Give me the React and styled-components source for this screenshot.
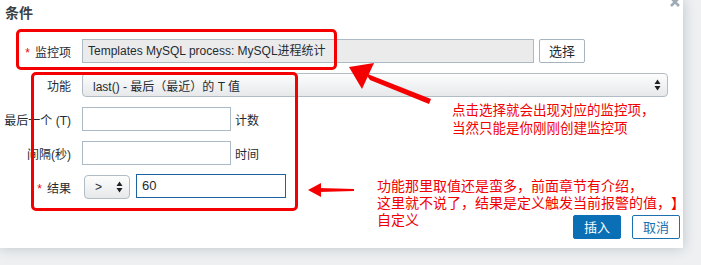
import React from "react";
import styled, { createGlobalStyle } from "styled-components";

const GlobalStyle = createGlobalStyle`
  html, body {
    margin: 0;
    padding: 0;
    background: #eef0f2;
    overflow: hidden;
  }
  body {
    font-family: Arial, "Liberation Sans", "Noto Sans CJK SC", sans-serif;
    text-spacing-trim: space-all;
  }
`;

const Page = styled.div`
  width: 701px;
  height: 265px;
  position: relative;
`;

const Dialog = styled.div`
  position: relative;
  width: 683px;
  height: 248px;
  background: #fff;
  box-shadow: 0 0 12px rgba(60, 75, 90, 0.28);
  display: flex;
  flex-direction: column;
`;

const Header = styled.div`
  height: 24px;
  line-height: 24px;
  padding-left: 5px;
  font-size: 14px;
  font-weight: bold;
  color: #3a3f44;
  font-family: "Noto Sans CJK SC", sans-serif;
`;

const Close = styled.svg`
  position: absolute;
  right: 2px;
  top: -4px;
`;

const Form = styled.div`
  margin-top: 15px;
  display: grid;
  grid-template-columns: 82px 1fr;
  row-gap: 10px;
  align-items: center;
`;

const Label = styled.div`
  text-align: right;
  padding-right: 11px;
  font-size: 12px;
  color: #1f2c33;
  font-family: "Liberation Sans", "Noto Sans CJK SC", sans-serif;
  white-space: nowrap;
`;

const Star = styled.span`
  color: #e00;
  margin-right: 5px;
`;

const Field = styled.div`
  display: flex;
  align-items: center;
  gap: ${p => p.$gap || 4}px;
  font-size: 12px;
  color: #1f2c33;
  font-family: "Liberation Sans", "Noto Sans CJK SC", sans-serif;
`;

const Input = styled.div`
  box-sizing: border-box;
  width: ${p => p.$w}px;
  height: 24px;
  line-height: 22px;
  padding: 0 5px;
  border: 1px solid ${p => (p.$focus ? "#1d62a0" : "#acbac5")};
  background: ${p => (p.$readonly ? "#ebebeb" : "#fff")};
  font-size: ${p => (p.$big ? 13 : 12)}px;
  color: #1f2c33;
  white-space: nowrap;
  overflow: hidden;
  margin-top: ${p => p.$mt || 0}px;
`;

const Select = styled.div`
  box-sizing: border-box;
  width: ${p => p.$w}px;
  height: 24px;
  margin-left: ${p => p.$ml || 0}px;
  padding: 0 6px 0 10px;
  display: flex;
  align-items: center;
  justify-content: space-between;
  border: 1px solid #b2bcc5;
  border-radius: 4px;
  background: linear-gradient(#fdfdfd, #e6e8ea);
  font-size: 12px;
  color: #1f2c33;
`;

const Button = styled.div`
  box-sizing: border-box;
  width: ${p => p.$w || 48}px;
  height: 24px;
  line-height: 22px;
  text-align: center;
  font-size: 13px;
  border-radius: 2px;
  border: 1px solid ${p => (p.$primary ? "#0a6fb5" : p.$blue ? "#1b71b0" : "#a6b4bf")};
  background: ${p => (p.$primary ? "#0a6fb5" : "#fff")};
  color: ${p => (p.$primary ? "#fff" : p.$blue ? "#1b71b0" : "#1f2c33")};
  font-family: "Noto Sans CJK SC", sans-serif;
`;

const Footer = styled.div`
  margin-top: 16px;
  display: flex;
  justify-content: flex-end;
  gap: 11px;
  padding-right: 3px;
`;

const Mark = styled.div`
  position: absolute;
  left: ${p => p.$x}px;
  top: ${p => p.$y}px;
  width: ${p => p.$w}px;
  height: ${p => p.$h}px;
  box-sizing: border-box;
  border: 3px solid #f40000;
  border-radius: 5px;
  pointer-events: none;
`;

const Note = styled.div`
  position: absolute;
  left: ${p => p.$x}px;
  top: ${p => p.$y}px;
  color: #f20000;
  font-size: ${p => p.$size || 14}px;
  line-height: ${p => p.$lh || 17}px;
  font-family: "Noto Sans CJK SC", sans-serif;
  white-space: nowrap;
  text-spacing-trim: space-all;
`;

const Arrows = styled.svg`
  position: absolute;
  left: 0;
  top: 0;
  pointer-events: none;
`;

const UpDown = () => (
  <svg width="7" height="12" viewBox="0 0 7 12">
    <path d="M3.5 0.5 L6.5 5 L0.5 5 Z M0.5 7 L6.5 7 L3.5 11.5 Z" fill="#222" />
  </svg>
);

export default function App() {
  return (
    <Page>
      <GlobalStyle />
      <Dialog>
        <Header>条件</Header>
        <Close width="12" height="12" viewBox="0 0 12 12">
          <path d="M2 2 L10 10 M10 2 L2 10" stroke="#9eabb4" strokeWidth="2.6" />
        </Close>
        <Form>
          <Label><Star>*</Star>监控项</Label>
          <Field $gap={5}>
            <Input $w={452} $readonly>Templates MySQL process: MySQL进程统计</Input>
            <Button $w={46}>选择</Button>
          </Field>

          <Label>功能</Label>
          <Field>
            <Select $w={586}>
              <span>last() - 最后（最近）的 T 值</span>
              <UpDown />
            </Select>
          </Field>

          <Label>最后一个 (T)</Label>
          <Field>
            <Input $w={149} />
            <span>计数</span>
          </Field>

          <Label>间隔(秒)</Label>
          <Field>
            <Input $w={149} />
            <span>时间</span>
          </Field>

          <Label><Star>*</Star>结果</Label>
          <Field $gap={6}>
            <Select $w={46} $ml={2}>
              <span>&gt;</span>
              <UpDown />
            </Select>
            <Input $w={150} $focus $big $mt={-2}>60</Input>
          </Field>
        </Form>
        <Footer>
          <Button $primary>插入</Button>
          <Button $blue>取消</Button>
        </Footer>
      </Dialog>

      <Mark $x={16} $y={29} $w={321} $h={41} />
      <Mark $x={31} $y={72} $w={267} $h={139} />

      <Arrows width="701" height="265" viewBox="0 0 701 265">
        <polygon points="349,67 374,63 362,89" fill="#f40000" />
        <polygon points="365,73 370,80 429,104 431,99" fill="#f40000" />
        <polygon points="308,190 321,183 321,197" fill="#f40000" />
        <polygon points="319,188 319,192 354,191 354,189" fill="#f40000" />
      </Arrows>

      <Note $x={452} $y={100} $size={13.5} $lh={18}>
        点击选择就会出现对应的监控项，<br />当然只能是你刚刚创建监控项
      </Note>
      <Note $x={377} $y={177}>
        功能那里取值还是蛮多，前面章节有介绍，<br />
        这里就不说了，结果是定义触发当前报警的值，】<br />
        自定义
      </Note>
    </Page>
  );
}
